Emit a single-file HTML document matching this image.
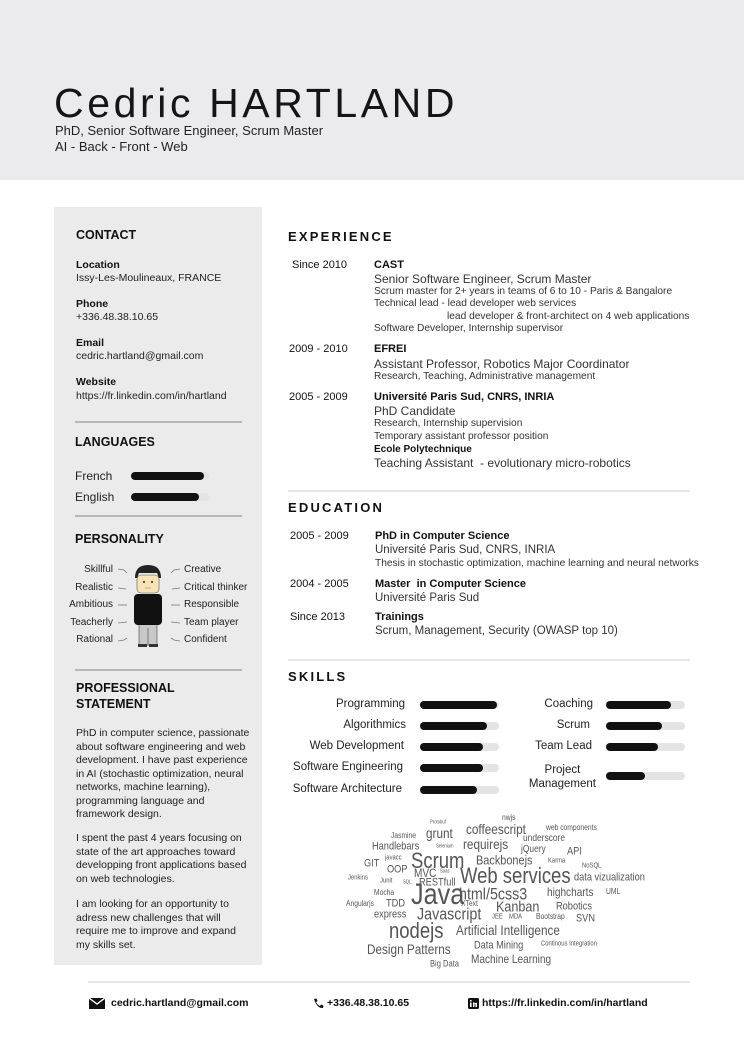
<!DOCTYPE html>
<html><head><meta charset="utf-8"><style>
*{margin:0;padding:0;box-sizing:border-box}
body{width:744px;height:1052px;background:#fff;position:relative;overflow:hidden;font-family:"Liberation Sans","DejaVu Sans",sans-serif;color:#222}
.a{position:absolute;white-space:nowrap;line-height:1}
.hdr{position:absolute;left:0;top:0;width:744px;height:180px;background:#ebebed}
.side{position:absolute;left:54px;top:207px;width:208px;height:758px;background:#ebebeb}
.h{font-weight:bold;font-size:12.5px;color:#111}
.sec{font-weight:bold;font-size:13px;letter-spacing:2.2px;color:#111}
.lbl{font-weight:bold;font-size:10.5px;color:#111}
.val{font-size:10.5px;color:#222}
.hl{position:absolute;height:2px;background:#b8b8b8}
.rl{position:absolute;height:2px;background:#e6e6e6}
.bar{position:absolute;height:8px;border-radius:4px;background:#e4e4e4}
.bar i{position:absolute;left:0;top:0;height:8px;border-radius:4px;background:#111}
.d{font-size:11px;color:#111}
.t1{font-size:12px;color:#333}
.t2{font-size:10.2px;color:#333}
.b{font-weight:bold;font-size:11px;color:#111}
.sk{font-size:11.5px;color:#222;text-align:right}
.w{position:absolute;white-space:nowrap;line-height:1;color:#555;transform:translateY(-50%) scaleX(.84);transform-origin:left center}
.p{font-size:10px;color:#222}
.st{position:absolute;left:76px;font-size:10.5px;line-height:13.5px;color:#222;white-space:nowrap}
</style></head><body>
<div class="hdr"></div>
<div class="a" style="left:54px;top:83px;font-size:41px;letter-spacing:3.6px;color:#151515">Cedric HARTLAND</div>
<div class="a" style="left:55px;top:124px;font-size:13px;color:#222">PhD, Senior Software Engineer, Scrum Master</div>
<div class="a" style="left:55px;top:140px;font-size:13px;color:#222">AI - Back - Front - Web</div>

<div class="side"></div>
<div class="a h" style="left:76px;top:229px">CONTACT</div>
<div class="a lbl" style="left:76px;top:260px">Location</div>
<div class="a val" style="left:76px;top:273px">Issy-Les-Moulineaux, FRANCE</div>
<div class="a lbl" style="left:76px;top:299px">Phone</div>
<div class="a val" style="left:76px;top:312px">+336.48.38.10.65</div>
<div class="a lbl" style="left:76px;top:338px">Email</div>
<div class="a val" style="left:76px;top:351px">cedric.hartland@gmail.com</div>
<div class="a lbl" style="left:76px;top:377px">Website</div>
<div class="a val" style="left:76px;top:391px">https://fr.linkedin.com/in/hartland</div>
<div class="hl" style="left:75px;top:421px;width:167px"></div>
<div class="a h" style="left:75px;top:436px">LANGUAGES</div>
<div class="a" style="left:75px;top:470px;font-size:12px">French</div>
<div class="bar" style="left:131px;top:472px;width:78px"><i style="width:73px"></i></div>
<div class="a" style="left:75px;top:491px;font-size:12px">English</div>
<div class="bar" style="left:131px;top:493px;width:78px"><i style="width:68px"></i></div>
<div class="hl" style="left:75px;top:515px;width:167px"></div>
<div class="a h" style="left:75px;top:533px">PERSONALITY</div>
<div class="a p" style="right:631px;top:565px">Skillful</div>
<div class="a p" style="right:631px;top:583px">Realistic</div>
<div class="a p" style="right:631px;top:600px">Ambitious</div>
<div class="a p" style="right:631px;top:618px">Teacherly</div>
<div class="a p" style="right:631px;top:635px">Rational</div>
<div class="a p" style="left:184px;top:565px">Creative</div>
<div class="a p" style="left:184px;top:583px">Critical thinker</div>
<div class="a p" style="left:184px;top:600px">Responsible</div>
<div class="a p" style="left:184px;top:618px">Team player</div>
<div class="a p" style="left:184px;top:635px">Confident</div>
<svg style="position:absolute;left:0;top:0" width="744" height="1052">
<g stroke="#777" stroke-width="0.8" fill="none">
<path d="M118 569 L124 570 L127 573"/><path d="M118 588 L126 589"/><path d="M118 605 L127 605"/><path d="M118 623 L127 622"/><path d="M118 641 L124 640 L127 638"/>
<path d="M180 569 L174 570 L171 573"/><path d="M180 588 L172 589"/><path d="M180 605 L171 605"/><path d="M180 623 L171 622"/><path d="M180 641 L174 640 L171 638"/>
</g>
<rect x="139" y="622" width="18" height="23" fill="#c8c8c8" stroke="#444" stroke-width="0.6"/>
<line x1="148" y1="628" x2="148" y2="645" stroke="#444" stroke-width="0.6"/>
<rect x="138" y="644" width="9" height="3" fill="#333"/><rect x="149" y="644" width="9" height="3" fill="#333"/>
<rect x="134" y="594" width="28" height="31" rx="4" fill="#111"/>
<rect x="137" y="575" width="22" height="18" rx="4" fill="#f7e3b5" stroke="#555" stroke-width="0.6"/>
<path d="M135 578 Q135 565 148 565 Q161 565 161 578 L159 578 L157 573 L139 573 L137 578 Z" fill="#222"/>
<circle cx="144" cy="582" r="1" fill="#222"/><circle cx="152" cy="582" r="1" fill="#222"/>
<line x1="145" y1="588" x2="151" y2="588" stroke="#7a5" stroke-width="0.6"/>
</svg>
<div class="hl" style="left:75px;top:669px;width:167px"></div>
<div class="a h" style="left:76px;top:682px">PROFESSIONAL</div>
<div class="a h" style="left:76px;top:698px">STATEMENT</div>
<div class="st" style="top:727px">PhD in computer science, passionate<br>about software engineering and web<br>development. I have past experience<br>in AI (stochastic optimization, neural<br>networks, machine learning),<br>programming language and<br>framework design.</div>
<div class="st" style="top:832px">I spent the past 4 years focusing on<br>state of the art approaches toward<br>developping front applications based<br>on web technologies.</div>
<div class="st" style="top:898px">I am looking for an opportunity to<br>adress new challenges that will<br>require me to improve and expand<br>my skills set.</div>

<div class="a sec" style="left:288px;top:230px">EXPERIENCE</div>
<div class="a d" style="left:292px;top:260px">Since 2010</div>
<div class="a b" style="left:374px;top:260px">CAST</div>
<div class="a t1" style="left:374px;top:273px">Senior Software Engineer, Scrum Master</div>
<div class="a t2" style="left:374px;top:287px">Scrum master for 2+ years in teams of 6 to 10 - Paris &amp; Bangalore</div>
<div class="a t2" style="left:374px;top:299px">Technical lead - lead developer web services</div>
<div class="a t2" style="left:447px;top:312px">lead developer &amp; front-architect on 4 web applications</div>
<div class="a t2" style="left:374px;top:324px">Software Developer, Internship supervisor</div>
<div class="a d" style="left:289px;top:344px">2009 - 2010</div>
<div class="a b" style="left:374px;top:344px">EFREI</div>
<div class="a t1" style="left:374px;top:358px">Assistant Professor, Robotics Major Coordinator</div>
<div class="a t2" style="left:374px;top:372px">Research, Teaching, Administrative management</div>
<div class="a d" style="left:289px;top:392px">2005 - 2009</div>
<div class="a b" style="left:374px;top:392px">Université Paris Sud, CNRS, INRIA</div>
<div class="a t1" style="left:374px;top:405px">PhD Candidate</div>
<div class="a t2" style="left:374px;top:419px">Research, Internship supervision</div>
<div class="a t2" style="left:374px;top:432px">Temporary assistant professor position</div>
<div class="a b" style="left:374px;top:445px;font-size:10px">Ecole Polytechnique</div>
<div class="a t1" style="left:374px;top:457px">Teaching Assistant &nbsp;- evolutionary micro-robotics</div>
<div class="rl" style="left:288px;top:490px;width:402px"></div>

<div class="a sec" style="left:288px;top:501px">EDUCATION</div>
<div class="a d" style="left:290px;top:531px">2005 - 2009</div>
<div class="a b" style="left:375px;top:531px">PhD in Computer Science</div>
<div class="a t1" style="left:375px;top:545px;font-size:11.5px">Université Paris Sud, CNRS, INRIA</div>
<div class="a t2" style="left:375px;top:559px">Thesis in stochastic optimization, machine learning and neural networks</div>
<div class="a d" style="left:290px;top:579px">2004 - 2005</div>
<div class="a b" style="left:375px;top:579px">Master &nbsp;in Computer Science</div>
<div class="a t1" style="left:375px;top:593px;font-size:11.5px">Université Paris Sud</div>
<div class="a d" style="left:290px;top:612px">Since 2013</div>
<div class="a b" style="left:375px;top:612px">Trainings</div>
<div class="a t1" style="left:375px;top:626px;font-size:11.5px">Scrum, Management, Security (OWASP top 10)</div>
<div class="rl" style="left:288px;top:659px;width:402px"></div>

<div class="a sec" style="left:288px;top:670px">SKILLS</div>
<div class="a sk" style="right:339px;top:699px">Programming</div>
<div class="a sk" style="right:338px;top:720px">Algorithmics</div>
<div class="a sk" style="right:340px;top:741px">Web Development</div>
<div class="a sk" style="right:341px;top:762px">Software Engineering</div>
<div class="a sk" style="right:342px;top:784px">Software Architecture</div>
<div class="bar" style="left:420px;top:701px;width:79px"><i style="width:77px"></i></div>
<div class="bar" style="left:420px;top:722px;width:79px"><i style="width:67px"></i></div>
<div class="bar" style="left:420px;top:743px;width:79px"><i style="width:63px"></i></div>
<div class="bar" style="left:420px;top:764px;width:79px"><i style="width:63px"></i></div>
<div class="bar" style="left:420px;top:786px;width:79px"><i style="width:57px"></i></div>
<div class="a sk" style="right:151px;top:699px">Coaching</div>
<div class="a sk" style="right:154px;top:720px">Scrum</div>
<div class="a sk" style="right:152px;top:741px">Team Lead</div>
<div class="a sk" style="right:148px;top:763px;text-align:center;line-height:14px">Project<br>Management</div>
<div class="bar" style="left:606px;top:701px;width:79px"><i style="width:65px"></i></div>
<div class="bar" style="left:606px;top:722px;width:79px"><i style="width:56px"></i></div>
<div class="bar" style="left:606px;top:743px;width:79px"><i style="width:52px"></i></div>
<div class="bar" style="left:606px;top:772px;width:79px"><i style="width:39px"></i></div>

<div class="w" style="left:502px;top:818px;font-size:8px">nwjs</div>
<div class="w" style="left:430px;top:823px;font-size:5px">Protobuf</div>
<div class="w" style="left:466px;top:829px;font-size:14px">coffeescript</div>
<div class="w" style="left:546px;top:828px;font-size:8px">web components</div>
<div class="w" style="left:391px;top:836px;font-size:8px">Jasmine</div>
<div class="w" style="left:426px;top:833px;font-size:14px">grunt</div>
<div class="w" style="left:523px;top:839px;font-size:10px">underscore</div>
<div class="w" style="left:372px;top:847px;font-size:11px">Handlebars</div>
<div class="w" style="left:436px;top:847px;font-size:5px">Selenium</div>
<div class="w" style="left:463px;top:844px;font-size:14px">requirejs</div>
<div class="w" style="left:521px;top:850px;font-size:10px">jQuery</div>
<div class="w" style="left:567px;top:852px;font-size:11px">API</div>
<div class="w" style="left:364px;top:864px;font-size:11px">GIT</div>
<div class="w" style="left:385px;top:858px;font-size:7px">javacc</div>
<div class="w" style="left:411px;top:861px;font-size:22px">Scrum</div>
<div class="w" style="left:476px;top:860px;font-size:13px">Backbonejs</div>
<div class="w" style="left:548px;top:861px;font-size:7px">Karma</div>
<div class="w" style="left:582px;top:866px;font-size:7px">NoSQL</div>
<div class="w" style="left:387px;top:870px;font-size:11px">OOP</div>
<div class="w" style="left:414px;top:873px;font-size:12px">MVC</div>
<div class="w" style="left:440px;top:872px;font-size:5px">Saas</div>
<div class="w" style="left:460px;top:876px;font-size:22px">Web services</div>
<div class="w" style="left:348px;top:878px;font-size:7px">Jenkins</div>
<div class="w" style="left:380px;top:881px;font-size:7px">Junit</div>
<div class="w" style="left:403px;top:883px;font-size:5px">SQL</div>
<div class="w" style="left:419px;top:883px;font-size:11px">RESTfull</div>
<div class="w" style="left:574px;top:878px;font-size:11px">data vizualization</div>
<div class="w" style="left:374px;top:893px;font-size:8px">Mocha</div>
<div class="w" style="left:411px;top:895px;font-size:30px">Java</div>
<div class="w" style="left:459px;top:894px;font-size:17px">html/5css3</div>
<div class="w" style="left:547px;top:892px;font-size:12px">highcharts</div>
<div class="w" style="left:606px;top:892px;font-size:8px">UML</div>
<div class="w" style="left:346px;top:904px;font-size:8px">Angularjs</div>
<div class="w" style="left:386px;top:904px;font-size:11px">TDD</div>
<div class="w" style="left:461px;top:904px;font-size:8px">XText</div>
<div class="w" style="left:496px;top:907px;font-size:15px">Kanban</div>
<div class="w" style="left:556px;top:907px;font-size:11px">Robotics</div>
<div class="w" style="left:374px;top:915px;font-size:11px">express</div>
<div class="w" style="left:417px;top:914px;font-size:17px">Javascript</div>
<div class="w" style="left:492px;top:917px;font-size:7px">JEE</div>
<div class="w" style="left:509px;top:917px;font-size:7px">MDA</div>
<div class="w" style="left:536px;top:917px;font-size:8px">Bootstrap</div>
<div class="w" style="left:576px;top:919px;font-size:11px">SVN</div>
<div class="w" style="left:389px;top:931px;font-size:22px">nodejs</div>
<div class="w" style="left:456px;top:930px;font-size:14px">Artificial Intelligence</div>
<div class="w" style="left:367px;top:949px;font-size:14px">Design Patterns</div>
<div class="w" style="left:474px;top:946px;font-size:11px">Data Mining</div>
<div class="w" style="left:541px;top:944px;font-size:7px">Continous Integration</div>
<div class="w" style="left:430px;top:964px;font-size:9px">Big Data</div>
<div class="w" style="left:471px;top:959px;font-size:12px">Machine Learning</div>

<div class="rl" style="left:88px;top:981px;width:602px"></div>
<svg style="position:absolute;left:89px;top:998px" width="16" height="11"><path d="M0 0 H16 V11 H0 Z" fill="#111"/><path d="M0 0 L8 6 L16 0" stroke="#fff" stroke-width="1.4" fill="none"/></svg>
<div class="a" style="left:111px;top:998px;font-size:10.5px;font-weight:bold;color:#111">cedric.hartland@gmail.com</div>
<svg style="position:absolute;left:313px;top:998px" width="11" height="11" viewBox="0 0 11 11"><path d="M1 1 L3.5 0.5 L4.5 3 L3 4 Q4.5 7 7 8 L8 6.5 L10.5 7.5 L10 10 Q4 10.5 1 1 Z" fill="#111"/></svg>
<div class="a" style="left:327px;top:998px;font-size:10.5px;font-weight:bold;color:#111">+336.48.38.10.65</div>
<svg style="position:absolute;left:468px;top:998px" width="11" height="11"><rect width="11" height="11" rx="1.5" fill="#111"/><rect x="2" y="4.5" width="1.6" height="4.5" fill="#fff"/><circle cx="2.8" cy="2.8" r="0.9" fill="#fff"/><path d="M5 4.5 H6.5 V9 H5 Z M6.5 5.5 Q7.5 4.2 9 5 V9 H7.5 V6.5 Q7 5.7 6.5 6.3 Z" fill="#fff"/></svg>
<div class="a" style="left:482px;top:998px;font-size:10.5px;font-weight:bold;color:#111">https://fr.linkedin.com/in/hartland</div>
</body></html>
